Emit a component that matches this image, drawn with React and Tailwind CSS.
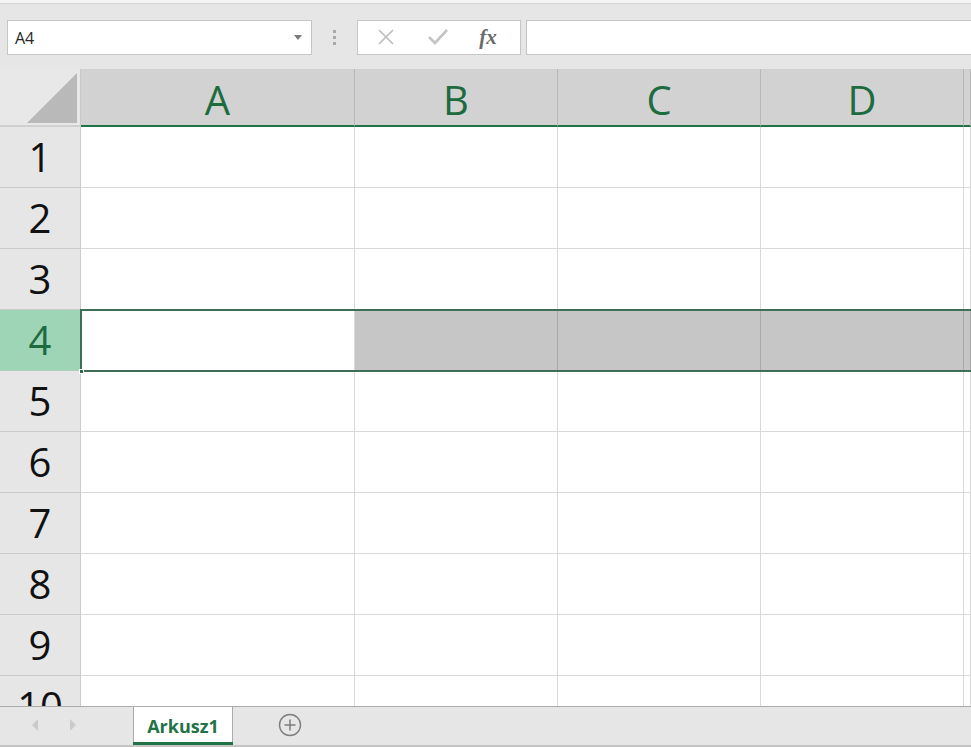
import { Fragment } from "react";

const COLS = [
  { id: "A", w: 274 },
  { id: "B", w: 203 },
  { id: "C", w: 203 },
  { id: "D", w: 203 },
  // E is only a sliver at the right edge, its letter sits off screen
  { id: "E", w: null, hidden: true },
];
const ROWS = [1, 2, 3, 4, 5, 6, 7, 8, 9, 10];
const ACTIVE_ROW = 4;

function NameBox() {
  return (
    <div className="flex items-center w-[305px] h-[35px] bg-white border border-[#c6c6c6] pl-[7px] pr-[9px]">
      <span className="flex-1 text-[16px] text-[#262626] pt-[2px]">A4</span>
      <svg width="8" height="5" viewBox="0 0 8 5">
        <path d="M0 0 L8 0 L4 5 Z" fill="#7a7a7a" />
      </svg>
    </div>
  );
}

function FormulaButtons() {
  return (
    <div className="flex items-center w-[164px] h-[35px] bg-white border border-[#c6c6c6]">
      <div className="w-[54px] flex justify-center pl-[2px]">
        <svg width="18" height="18" viewBox="0 0 18 18">
          <path d="M2 2 L16 16 M16 2 L2 16" stroke="#bcbcbc" strokeWidth="1.6" />
        </svg>
      </div>
      <div className="w-[52px] flex justify-center">
        <svg width="20" height="16" viewBox="0 0 20 16">
          <path d="M1 8 L7 14 L19 1" stroke="#c4c4c4" strokeWidth="2.6" fill="none" />
        </svg>
      </div>
      <div className="flex-1 flex justify-center pr-[8px]">
        <span className="italic font-bold text-[21px] text-[#6a6a6a] font-['Liberation_Serif',serif] leading-none">
          fx
        </span>
      </div>
    </div>
  );
}

function Toolbar() {
  return (
    <div className="h-[65px] bg-[#e6e6e6] flex items-center pl-[7px] pt-[1px]">
      <NameBox />
      <div className="w-[45px] flex flex-col items-center gap-[3px]">
        <div className="w-[3px] h-[3px] bg-[#a8a8a8]" />
        <div className="w-[3px] h-[3px] bg-[#a8a8a8]" />
        <div className="w-[3px] h-[3px] bg-[#a8a8a8]" />
      </div>
      <FormulaButtons />
      <div className="ml-[5px] flex-1 h-[35px] bg-white border border-[#c6c6c6] border-r-0" />
    </div>
  );
}

function Sheet() {
  return (
    <div className="relative flex-1 overflow-hidden bg-white">
      <div className="grid grid-cols-[81px_274px_203px_203px_203px_1fr] grid-rows-[58px_repeat(10,61px)]">
        {/* corner */}
        <div className="bg-[#e8e8e8] border-r border-[#c8c8c8] border-b-2 border-b-[#d0d0d0] flex items-end justify-end pr-[3px] pb-[2px]">
          <svg width="50" height="50" viewBox="0 0 50 50">
            <path d="M0 50 L50 50 L50 0 Z" fill="#b9b9b9" />
          </svg>
        </div>
        {COLS.map((c) => (
          <div
            key={c.id}
            className="bg-[#d2d2d2] border-r border-[#b8b8b8] border-b-2 border-b-[#217346] flex items-center justify-center text-[40px] text-[#1d6b3f] leading-none pt-[5px]"
          >
            {c.hidden ? null : c.id}
          </div>
        ))}
        {ROWS.map((r) => {
          const active = r === ACTIVE_ROW;
          return (
            <Fragment key={r}>
              <div
                className={
                  active
                    ? "bg-[#9fd5b7] border-r border-b border-[#b0cfbd] flex items-center justify-center text-[40px] text-[#1d6b3f] leading-none"
                    : "bg-[#e6e6e6] border-r border-b border-[#cbcbcb] flex items-center justify-center text-[40px] text-[#111] leading-none"
                }
              >
                {r}
              </div>
              {COLS.map((c, i) => (
                <div
                  key={c.id}
                  className={
                    active && i > 0
                      ? "bg-[#c6c6c6] border-r border-b border-[#a9a9a9]"
                      : "bg-white border-r border-b border-[#d9d9d9]"
                  }
                />
              ))}
            </Fragment>
          );
        })}
      </div>
      {/* row selection outline */}
      <div className="absolute left-[80px] right-0 top-[240px] h-[63px] border-2 border-r-0 border-[#3f6e58] pointer-events-none" />
      <div className="absolute left-[79px] top-[300px] w-[5px] h-[5px] bg-[#2b6b4a] border border-white" />
    </div>
  );
}

function TabBar() {
  return (
    <div className="h-[41px] bg-[#e6e6e6] border-t border-[#ababab] border-b-2 border-b-[#c4c4c4] flex items-stretch">
      <div className="w-[133px] flex items-center pl-[31px] gap-[30px] pb-[2px]">
        <svg width="8" height="12" viewBox="0 0 8 12">
          <path d="M7 0 L1 6 L7 12 Z" fill="#cacaca" />
        </svg>
        <svg width="8" height="12" viewBox="0 0 8 12">
          <path d="M1 0 L7 6 L1 12 Z" fill="#cacaca" />
        </svg>
      </div>
      <div className="-mt-px w-[100px] bg-white border-l border-r border-t border-[#ababab] flex flex-col">
        <div className="flex-1 flex items-center justify-center font-bold text-[18px] text-[#217346] pt-[3px]">
          Arkusz1
        </div>
        <div className="h-[3px] bg-[#217346] mx-[-1px]" />
      </div>
      <div className="flex items-center pl-[45px] pb-[2px]">
        <svg width="24" height="24" viewBox="0 0 24 24">
          <circle cx="12" cy="12" r="10.5" fill="none" stroke="#7d7d7d" strokeWidth="1.4" />
          <path d="M12 6.5 V17.5 M6.5 12 H17.5" stroke="#7d7d7d" strokeWidth="1.5" />
        </svg>
      </div>
    </div>
  );
}

export default function App() {
  return (
    <div className="w-[971px] h-[747px] flex flex-col overflow-hidden font-['Open_Sans','Noto_Sans',sans-serif] bg-white">
      <div className="h-[4px] bg-[#f4f4f4] border-b border-[#d6d6d6]" />
      <Toolbar />
      <Sheet />
      <TabBar />
    </div>
  );
}
